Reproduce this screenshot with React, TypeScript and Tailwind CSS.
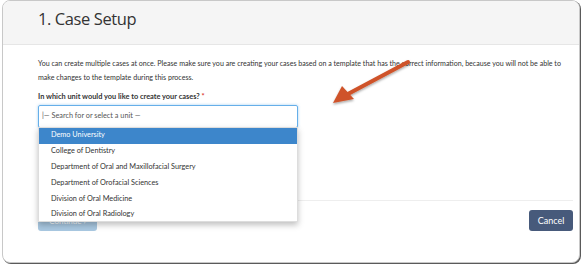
import React from "react";

const items = [
  "Demo University",
  "College of Dentistry",
  "Department of Oral and Maxillofacial Surgery",
  "Department of Orofacial Sciences",
  "Division of Oral Medicine",
  "Division of Oral Radiology",
  "Division of Periodontics",
];

export default function App() {
  return (
    <div className="w-[583px] h-[267px] bg-white relative overflow-hidden" style={{ fontFamily: "Lato, 'Open Sans', sans-serif" }}>
      <div className="absolute left-[2px] top-0 w-[578px] h-[263px] rounded-[8px] border border-[#c8c8c8] shadow-[1px_1px_0_#5a5a5a] bg-white overflow-hidden flex flex-col">
        <div className="h-[44px] shrink-0 bg-[#f5f5f5] border-b border-[#e6e6e6] pl-[35px] pb-[7px] flex items-center">
          <h1 className="text-[16.5px] tracking-[-0.4px] text-[#333] leading-none" style={{ fontFamily: "'Open Sans', Lato, sans-serif" }}>1. Case Setup</h1>
        </div>
        <div className="pl-[35px] pr-[6px] pt-[12px] text-[7.3px] text-[#333] flex-1 flex flex-col">
          <p className="leading-[13.5px] w-[537px] text-[7.1px]">
            You can create multiple cases at once. Please make sure you are creating your cases based on a template that has the correct information, because you will not be able to make changes to the template during this process.
          </p>
          <div className="mt-[7px] font-bold leading-[12px] text-[7.4px]">
            In which unit would you like to create your cases? <span className="text-[#d9302c]">*</span>
          </div>
          <div className="relative w-[260px] mt-[2px]">
            <div className="h-[23px] border border-[#66afe9] rounded-[2px] flex items-center pl-[3px] text-[#555] shadow-[0_0_3px_rgba(102,175,233,0.6)]">
              |— Search for or select a unit —
            </div>
            <div className="absolute left-0 top-[22px] w-[260px] h-[95px] bg-white border border-[#ddd] shadow-[0_3px_6px_rgba(0,0,0,0.25)] overflow-hidden z-10">
              {items.map((t, i) => (
                <div
                  key={t}
                  className={
                    i === 0
                      ? "h-[15.8px] flex items-center pl-[12px] bg-[#3d86cb] text-white"
                      : "h-[15.8px] flex items-center pl-[12px] text-[#333]"
                  }
                >
                  {t}
                </div>
              ))}
            </div>
          </div>
          <div className="mt-[72px] border-t border-[#eee] pt-[9px] flex justify-between">
            <div className="w-[59px] h-[21px] bg-[#a9c8e1] rounded-[3px] text-white text-[8px] flex items-center justify-center">Continue ›</div>
            <div className="w-[44px] h-[21px] bg-[#475a7b] rounded-[3px] text-white text-[9px] flex items-center justify-center">Cancel</div>
          </div>
        </div>
      </div>
      <svg className="absolute left-0 top-0 pointer-events-none z-20" width="583" height="267">
        <defs>
          <filter id="sh" x="-20%" y="-20%" width="140%" height="140%">
            <feDropShadow dx="0" dy="1.5" stdDeviation="1" floodColor="#000" floodOpacity="0.35" />
          </filter>
        </defs>
        <g filter="url(#sh)" fill="#cf5329">
          <line x1="408" y1="62" x2="346" y2="95" stroke="#cf5329" strokeWidth="4" strokeLinecap="round" />
          <polygon points="333,103 342,86 354,99" />
        </g>
      </svg>
    </div>
  );
}
